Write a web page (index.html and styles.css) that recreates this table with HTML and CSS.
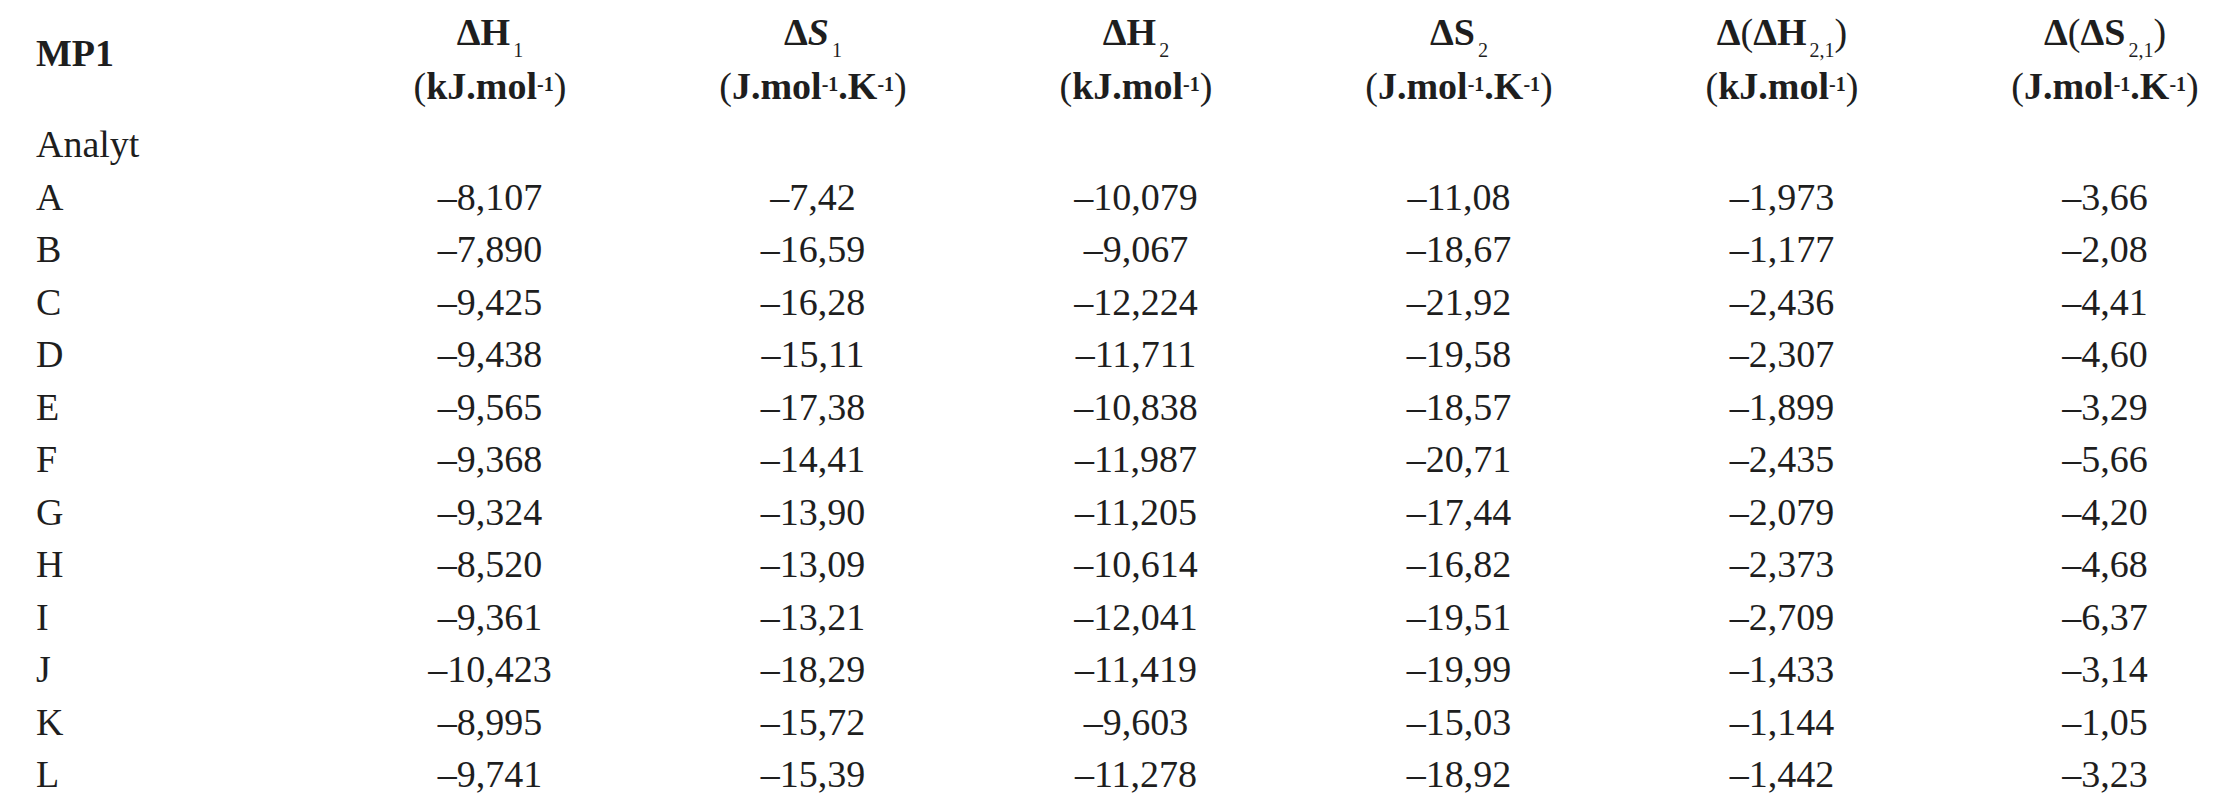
FILE: index.html
```html
<!DOCTYPE html>
<html lang="cs">
<head>
<meta charset="utf-8">
<title>MP1</title>
<link rel="stylesheet" href="styles.css">
</head>
<body>
<div class="table">
  <div class="head label"><span class="line">MP1</span></div>
  <div class="head"><span class="line">ΔH<sub>1</sub></span><span class="line"><span class="p">(</span>kJ.mol<sup>-1</sup><span class="p">)</span></span></div>
  <div class="head"><span class="line">Δ<i>S</i><sub>1</sub></span><span class="line"><span class="p">(</span>J.mol<sup>-1</sup>.K<sup>-1</sup><span class="p">)</span></span></div>
  <div class="head"><span class="line">ΔH<sub>2</sub></span><span class="line"><span class="p">(</span>kJ.mol<sup>-1</sup><span class="p">)</span></span></div>
  <div class="head"><span class="line">ΔS<sub>2</sub></span><span class="line"><span class="p">(</span>J.mol<sup>-1</sup>.K<sup>-1</sup><span class="p">)</span></span></div>
  <div class="head"><span class="line">Δ<span class="p">(</span>ΔH<sub>2,1</sub><span class="p">)</span></span><span class="line"><span class="p">(</span>kJ.mol<sup>-1</sup><span class="p">)</span></span></div>
  <div class="head"><span class="line">Δ<span class="p">(</span>ΔS<sub>2,1</sub><span class="p">)</span></span><span class="line"><span class="p">(</span>J.mol<sup>-1</sup>.K<sup>-1</sup><span class="p">)</span></span></div>

  <div class="cell label group">Analyt</div>

  <div class="cell label">A</div><div class="cell">–8,107</div><div class="cell">–7,42</div><div class="cell">–10,079</div><div class="cell">–11,08</div><div class="cell">–1,973</div><div class="cell">–3,66</div>
  <div class="cell label">B</div><div class="cell">–7,890</div><div class="cell">–16,59</div><div class="cell">–9,067</div><div class="cell">–18,67</div><div class="cell">–1,177</div><div class="cell">–2,08</div>
  <div class="cell label">C</div><div class="cell">–9,425</div><div class="cell">–16,28</div><div class="cell">–12,224</div><div class="cell">–21,92</div><div class="cell">–2,436</div><div class="cell">–4,41</div>
  <div class="cell label">D</div><div class="cell">–9,438</div><div class="cell">–15,11</div><div class="cell">–11,711</div><div class="cell">–19,58</div><div class="cell">–2,307</div><div class="cell">–4,60</div>
  <div class="cell label">E</div><div class="cell">–9,565</div><div class="cell">–17,38</div><div class="cell">–10,838</div><div class="cell">–18,57</div><div class="cell">–1,899</div><div class="cell">–3,29</div>
  <div class="cell label">F</div><div class="cell">–9,368</div><div class="cell">–14,41</div><div class="cell">–11,987</div><div class="cell">–20,71</div><div class="cell">–2,435</div><div class="cell">–5,66</div>
  <div class="cell label">G</div><div class="cell">–9,324</div><div class="cell">–13,90</div><div class="cell">–11,205</div><div class="cell">–17,44</div><div class="cell">–2,079</div><div class="cell">–4,20</div>
  <div class="cell label">H</div><div class="cell">–8,520</div><div class="cell">–13,09</div><div class="cell">–10,614</div><div class="cell">–16,82</div><div class="cell">–2,373</div><div class="cell">–4,68</div>
  <div class="cell label">I</div><div class="cell">–9,361</div><div class="cell">–13,21</div><div class="cell">–12,041</div><div class="cell">–19,51</div><div class="cell">–2,709</div><div class="cell">–6,37</div>
  <div class="cell label">J</div><div class="cell">–10,423</div><div class="cell">–18,29</div><div class="cell">–11,419</div><div class="cell">–19,99</div><div class="cell">–1,433</div><div class="cell">–3,14</div>
  <div class="cell label">K</div><div class="cell">–8,995</div><div class="cell">–15,72</div><div class="cell">–9,603</div><div class="cell">–15,03</div><div class="cell">–1,144</div><div class="cell">–1,05</div>
  <div class="cell label">L</div><div class="cell">–9,741</div><div class="cell">–15,39</div><div class="cell">–11,278</div><div class="cell">–18,92</div><div class="cell">–1,442</div><div class="cell">–3,23</div>
</div>
</body>
</html>
```

FILE: styles.css
```css
html, body {
  margin: 0;
  padding: 0;
  background: #ffffff;
}

body {
  color: #1e1e1e;
  font-family: "Liberation Serif", "Times New Roman", serif;
  font-size: 38px;
  overflow: hidden;
}

.table {
  display: grid;
  grid-template-columns: 241px repeat(6, 220px);
  column-gap: 103px;
  padding: 5px 0 0 36px;
}

.head {
  font-weight: bold;
  line-height: 54px;
  text-align: center;
  white-space: nowrap;
}

.head .line {
  display: block;
}

.head.label {
  text-align: left;
  padding-top: 21px;
}

.head .p {
  font-weight: normal;
}

.head i {
  font-style: italic;
}

sub {
  font-size: 20px;
  line-height: 0;
  vertical-align: -12px;
  font-weight: normal;
  margin-left: 3px;
}

sup {
  font-size: 20px;
  line-height: 0;
  vertical-align: 8px;
}

.cell {
  line-height: 52.5px;
  text-align: center;
  white-space: nowrap;
}

.cell.label {
  text-align: left;
}

.cell.group {
  grid-column: 1 / -1;
  margin-top: 5px;
}
```
